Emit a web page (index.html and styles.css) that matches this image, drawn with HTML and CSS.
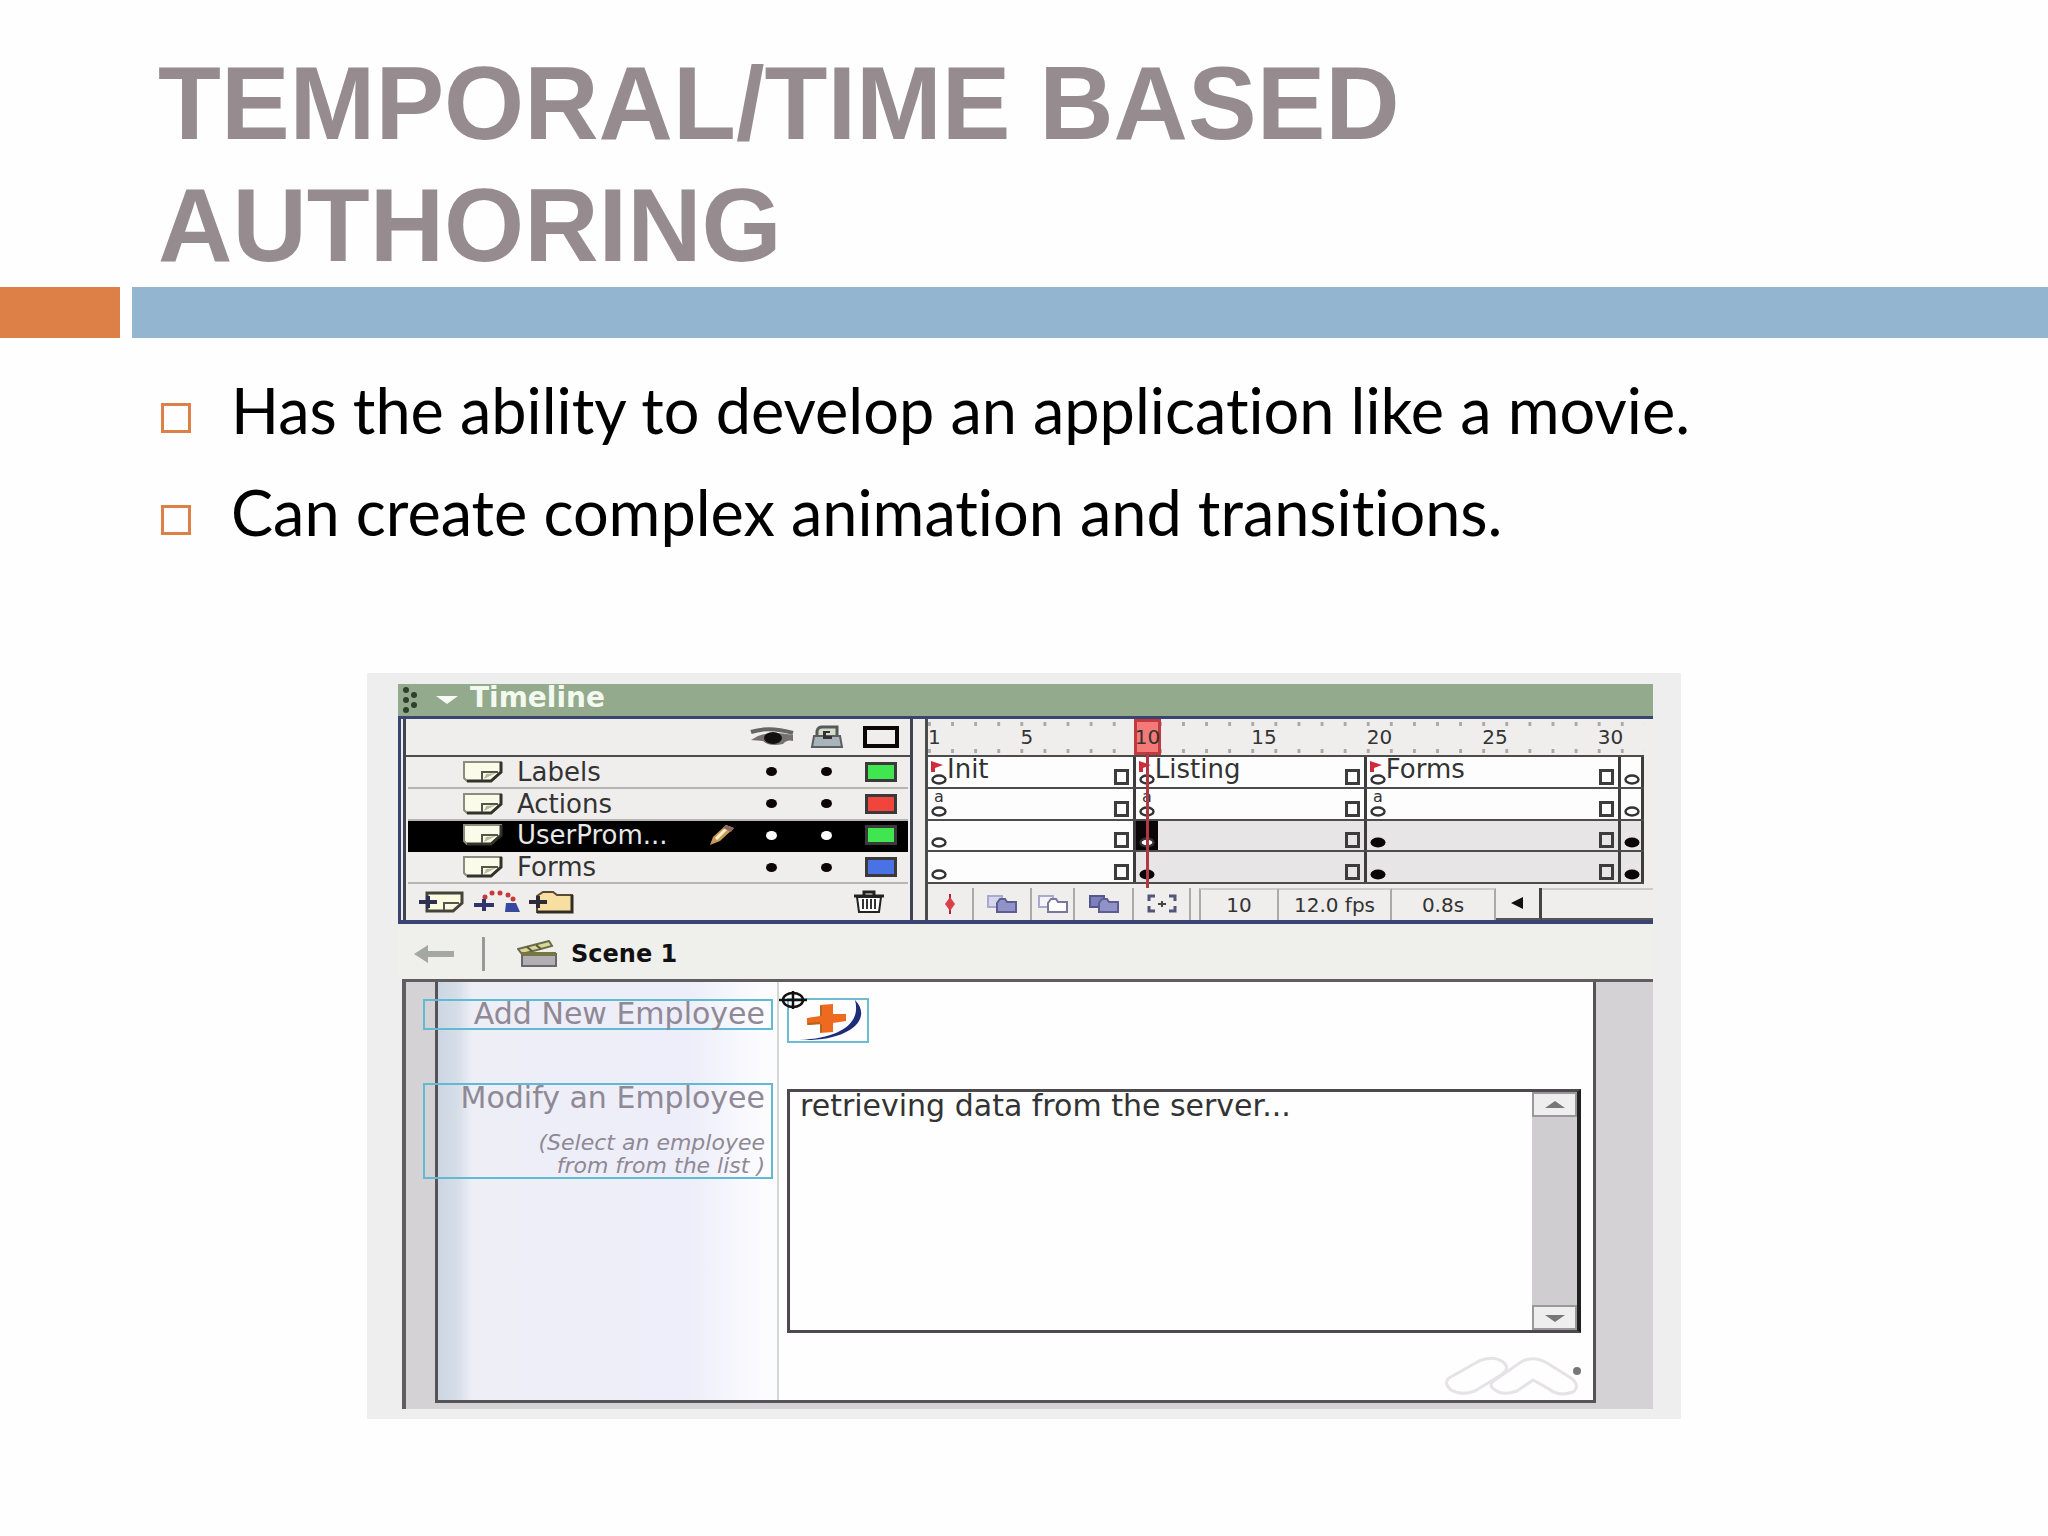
FILE: index.html
```html
<!DOCTYPE html>
<html lang="en">
<head>
    <meta charset="UTF-8">
    <meta name="viewport" content="width=device-width, initial-scale=1.0">
    <title>Temporal/Time Based Authoring</title>
    <link rel="stylesheet" href="styles.css">
</head>
<body>
    <!-- shared icons -->
    <svg class="defs" aria-hidden="true">
        <symbol id="page" viewBox="0 0 42 24">
            <path d="M2 2H39V12L29 21H5L2 18Z" fill="#fafbe9" stroke="#8c8c7c" stroke-width="2"/>
            <path d="M39 2V12L29 21H5" fill="none" stroke="#33332a" stroke-width="3"/>
            <path d="M20 20V12H36" fill="none" stroke="#55554a" stroke-width="2"/>
            <path d="M22 19L24 14L34 13Z" fill="#b9ba9c"/>
        </symbol>
        <symbol id="key" viewBox="0 0 16 11">
            <ellipse cx="8" cy="5.5" rx="6.5" ry="4" fill="#fff" stroke="#333" stroke-width="2.4"/>
        </symbol>
        <symbol id="keyfull" viewBox="0 0 16 11">
            <ellipse cx="8" cy="5.5" rx="7.5" ry="5" fill="#0b0508"/>
        </symbol>
        <symbol id="flag" viewBox="0 0 12 11">
            <path d="M0 0L12 4L4 7V11H0Z" fill="#cf2b3c"/>
        </symbol>
    </svg>

    <main class="slide">
        <h1>TEMPORAL/TIME BASED<br>AUTHORING</h1>
        <div class="bar"><span class="bar-orange"></span><span class="bar-blue"></span></div>
        <ul class="points">
            <li>Has the ability to develop an application like a movie.</li>
            <li>Can create complex animation and transitions.</li>
        </ul>

        <div class="shot">
            <div class="titlebar">
                <svg class="grip" viewBox="0 0 16 26"><g fill="#2f3f2e"><circle cx="4" cy="3" r="3"/><circle cx="12" cy="8" r="3"/><circle cx="4" cy="13" r="3"/><circle cx="12" cy="18" r="3"/><circle cx="4" cy="23" r="3"/></g></svg>
                <svg class="twist" viewBox="0 0 22 8"><path d="M0 0H22L11 8Z" fill="#f7fbf3"/></svg>
                <span>Timeline</span>
            </div>

            <div class="timeline">
                <div class="layers">
                    <div class="layer layer-head">
                        <svg class="eye" viewBox="0 0 46 20"><path d="M2 5Q20-1 44 6" stroke="#666" stroke-width="4" fill="none"/><path d="M2 13Q16 2 44 8V14Q38 12 34 17Q20 20 14 14Z" fill="#77716e"/><ellipse cx="24" cy="11" rx="9" ry="6" fill="#111"/></svg>
                        <svg class="lock" viewBox="0 0 34 24"><path d="M7 12V6Q8 2 12 2H27V12" fill="#d9dccb" stroke="#555b58" stroke-width="3"/><path d="M4 11H30L32 22H2Z" fill="#a9b4ba" stroke="#5a5f62" stroke-width="2"/><path d="M13 6H20V8H16V11H22V14H13Z" fill="#333"/></svg>
                        <span class="outline"></span>
                    </div>
                    <div class="layer">
                        <svg class="page"><use href="#page"/></svg>
                        <span class="name">Labels</span>
                        <i class="dot"></i><i class="dot"></i><i class="swatch green"></i>
                    </div>
                    <div class="layer">
                        <svg class="page"><use href="#page"/></svg>
                        <span class="name">Actions</span>
                        <i class="dot"></i><i class="dot"></i><i class="swatch red"></i>
                    </div>
                    <div class="layer selected">
                        <svg class="page"><use href="#page"/></svg>
                        <span class="name">UserProm...
                            <svg class="pencil" viewBox="0 0 26 22"><path d="M1 21L4 13L17 1L25 4L11 17Z" fill="#c89a58"/><path d="M7 15L19 3" stroke="#fff0cc" stroke-width="3"/><path d="M17 1L25 4L22 8L14 4Z" fill="#8d6b62"/></svg>
                        </span>
                        <i class="dot"></i><i class="dot"></i><i class="swatch green"></i>
                    </div>
                    <div class="layer">
                        <svg class="page"><use href="#page"/></svg>
                        <span class="name">Forms</span>
                        <i class="dot"></i><i class="dot"></i><i class="swatch blue"></i>
                    </div>
                    <div class="layer-tools">
                        <button aria-label="Insert layer"><svg viewBox="0 0 46 24"><path d="M8 3H43V13L34 21H8Z" fill="#fafbe0" stroke="#44443a" stroke-width="3"/><path d="M25 20V13H40" fill="none" stroke="#55554a" stroke-width="2"/><path d="M0 12H18M9 6V18" stroke="#2d3050" stroke-width="4"/></svg></button>
                        <button aria-label="Add motion guide"><svg viewBox="0 0 46 24"><g fill="#c83a3a"><circle cx="11" cy="7" r="2.5"/><circle cx="18" cy="3" r="2.5"/><circle cx="26" cy="3" r="2.5"/><circle cx="34" cy="5" r="2.5"/><circle cx="39" cy="9" r="2.5"/></g><path d="M0 15H20M10 9V21" stroke="#30346a" stroke-width="4"/><path d="M32 13H42L46 22H31Z" fill="#3848a0"/></svg></button>
                        <button aria-label="Insert layer folder"><svg viewBox="0 0 46 24"><path d="M8 6L14 2H24L28 5H43V22H8Z" fill="#f6dfa0" stroke="#5a4a35" stroke-width="2"/><path d="M43 5V22H8" fill="none" stroke="#332b24" stroke-width="3"/><path d="M0 12H18M9 6V18" stroke="#2f2b34" stroke-width="4"/></svg></button>
                        <button class="trash" aria-label="Delete layer"><svg viewBox="0 0 34 24"><path d="M2 6H32M12 5V2H22V5" stroke="#222" stroke-width="3" fill="none"/><path d="M5 7H29L27 22H7Z" fill="#fff" stroke="#222" stroke-width="2"/><path d="M11 9V19M15 9V19M19 9V19M23 9V19" stroke="#333" stroke-width="2"/></svg></button>
                    </div>
                </div>

                <div class="frames">
                    <div class="ruler">
                        <span class="n1">1</span>
                        <span class="n5">5</span>
                        <span class="n10">10</span>
                        <span class="n15">15</span>
                        <span class="n20">20</span>
                        <span class="n25">25</span>
                        <span class="n30">30</span>
                    </div>
                    <div class="track">
                        <div class="clip"><span class="mark"><svg class="flag"><use href="#flag"/></svg><svg class="key"><use href="#key"/></svg></span><span class="label">Init</span><i class="end"></i></div>
                        <div class="clip"><span class="mark"><svg class="flag"><use href="#flag"/></svg><svg class="key"><use href="#key"/></svg></span><span class="label">Listing</span><i class="end"></i></div>
                        <div class="clip"><span class="mark"><svg class="flag"><use href="#flag"/></svg><svg class="key"><use href="#key"/></svg></span><span class="label">Forms</span><i class="end"></i></div>
                        <div class="clip"><span class="mark"><svg class="key"><use href="#key"/></svg></span></div>
                    </div>
                    <div class="track">
                        <div class="clip"><span class="mark"><b>a</b><svg class="key"><use href="#key"/></svg></span><i class="end"></i></div>
                        <div class="clip"><span class="mark"><b>a</b><svg class="key"><use href="#key"/></svg></span><i class="end"></i></div>
                        <div class="clip"><span class="mark"><b>a</b><svg class="key"><use href="#key"/></svg></span><i class="end"></i></div>
                        <div class="clip"><span class="mark"><svg class="key"><use href="#key"/></svg></span></div>
                    </div>
                    <div class="track">
                        <div class="clip"><span class="mark"><svg class="key"><use href="#key"/></svg></span><i class="end"></i></div>
                        <div class="clip filled"><span class="mark current"><svg class="key"><use href="#key"/></svg></span><i class="end"></i></div>
                        <div class="clip filled"><span class="mark"><svg class="key"><use href="#keyfull"/></svg></span><i class="end"></i></div>
                        <div class="clip filled"><span class="mark"><svg class="key"><use href="#keyfull"/></svg></span></div>
                    </div>
                    <div class="track">
                        <div class="clip"><span class="mark"><svg class="key"><use href="#key"/></svg></span><i class="end"></i></div>
                        <div class="clip filled"><span class="mark"><svg class="key"><use href="#keyfull"/></svg></span><i class="end"></i></div>
                        <div class="clip filled"><span class="mark"><svg class="key"><use href="#keyfull"/></svg></span><i class="end"></i></div>
                        <div class="clip filled"><span class="mark"><svg class="key"><use href="#keyfull"/></svg></span></div>
                    </div>
                    <div class="frame-tools">
                        <button aria-label="Center frame"><svg viewBox="0 0 32 20"><path d="M16 0V20" stroke="#b32432" stroke-width="2"/><path d="M16 3L21 10L16 17L11 10Z" fill="#d9404c"/></svg></button>
                        <button aria-label="Onion skin"><svg viewBox="0 0 32 20"><path d="M2 2H16V13H2Z" fill="#d5d5ee" stroke="#a9a9cc" stroke-width="2"/><path d="M11 9L14 5H19L21 8H30V18H11Z" fill="#9192c8" stroke="#5c5d92" stroke-width="2"/></svg></button>
                        <button aria-label="Onion skin outlines"><svg viewBox="0 0 32 20"><path d="M2 2H16V13H2Z" fill="#f3f3fb" stroke="#a9a9cc" stroke-width="2"/><path d="M11 9L14 5H19L21 8H30V18H11Z" fill="#fff" stroke="#77789a" stroke-width="2"/></svg></button>
                        <button aria-label="Edit multiple frames"><svg viewBox="0 0 32 20"><path d="M2 2H16V13H2Z" fill="#7e80bd" stroke="#55578c" stroke-width="2"/><path d="M11 9L14 5H19L21 8H30V18H11Z" fill="#9192c8" stroke="#5c5d92" stroke-width="2"/></svg></button>
                        <button aria-label="Modify onion markers"><svg viewBox="0 0 32 20"><path d="M9 2H3V7M3 12V17H9M23 2H29V7M29 12V17H23" fill="none" stroke="#55557c" stroke-width="3"/><path d="M12 10H20M16 7V13" stroke="#444" stroke-width="2"/></svg></button>
                        <span class="readout first">10</span>
                        <span class="readout">12.0 fps</span>
                        <span class="readout">0.8s</span>
                        <button class="scroll-left" aria-label="Scroll left"><svg viewBox="0 0 32 20"><path d="M21 4V16L9 10Z" fill="#111"/></svg></button>
                        <span class="scroll-track"></span>
                    </div>
                </div>
            </div>

            <div class="scene">
                <button aria-label="Back"><svg viewBox="0 0 40 20"><path d="M0 10L14 1V7H40V13H14V19Z" fill="#a3a8a3"/></svg></button>
                <span class="rule"></span>
                <svg class="clapper" viewBox="0 0 42 28"><path d="M1 9L32 1L35 6L5 14Z" fill="#d9d893" stroke="#6b6b50" stroke-width="2"/><path d="M10 7L15 11M19 5L24 9" stroke="#55553c" stroke-width="2"/><path d="M5 14H39V26H5Z" fill="#b3aeb4" stroke="#6b6670" stroke-width="2"/><path d="M5 14H39" stroke="#74773f" stroke-width="4"/></svg>
                <span>Scene 1</span>
            </div>

            <div class="stage">
                <div class="canvas">
                    <div class="side">
                        <div class="pick"><p>Add New Employee</p></div>
                        <label class="pick modify" for="employees">
                            Modify an Employee
                            <em>(Select an employee<br>from from the list )</em>
                        </label>
                    </div>
                    <div class="form">
                        <button class="add" aria-label="Add employee">
                            <svg viewBox="0 0 78 42"><path d="M66 0C84 18 62 42 10 40C54 38 72 22 66 0Z" fill="#1d2c78"/><path d="M31 5L44 4V14H57V21L44 23V32L31 33V24L18 25V18L31 16Z" fill="#ee6a1e"/><path d="M32 6V16M32 24V32M19 24L31 23" stroke="#b5641c" stroke-width="2" fill="none"/></svg>
                            <svg class="target" viewBox="0 0 28 18"><ellipse cx="14" cy="9" rx="10" ry="7" fill="none" stroke="#111" stroke-width="2.5"/><path d="M0 9H28M14 0V18" stroke="#111" stroke-width="2.5"/></svg>
                        </button>
                        <div class="list">
                            <textarea id="employees" readonly>retrieving data from the server...</textarea>
                            <div class="scrollbar">
                                <button aria-label="Up"><svg viewBox="0 0 20 8"><path d="M0 7L10 0L20 7Z" fill="#777"/></svg></button>
                                <button aria-label="Down"><svg viewBox="0 0 20 8"><path d="M0 1L10 8L20 1Z" fill="#777"/></svg></button>
                            </div>
                        </div>
                        <svg class="logo" viewBox="0 0 140 40"><g fill="none" stroke="#e6e2e6" stroke-width="3"><path d="M8 22L38 5Q52-1 62 6Q70 12 60 19L34 35Q20 40 10 34Q2 27 8 22Z"/><path d="M54 24L80 6Q92-1 106 7L130 22Q140 30 132 36Q118 41 108 33L92 24L76 35Q62 40 54 34Q46 29 54 24Z"/></g><circle cx="136" cy="15" r="4" fill="#777"/></svg>
                    </div>
                </div>
            </div>
        </div>
    </main>
</body>
</html>
```
FILE: styles.css
```css
*,
*::before,
*::after {
    box-sizing: border-box;
}
body {
    margin: 0;
    background: #fefefe;
    font-family: Lato, sans-serif;
    color: #000;
}
button {
    padding: 0;
    border: 0;
    background: none;
}
svg {
    display: block;
}
.defs {
    display: none;
}

/* slide */
.slide {
    padding-top: 43px;
}
h1 {
    margin: 0 158px;
    font: bold 103px/122px "Liberation Sans", Arial, sans-serif;
    color: #968c8f;
}
.bar {
    display: flex;
    gap: 12px;
    height: 51px;
}
.bar-orange {
    width: 120px;
    background: #dd8047;
}
.bar-blue {
    flex: 1;
    background: #93b5cf;
}
.points {
    display: grid;
    gap: 22px;
    margin: 32px 161px 0;
    padding: 0;
    list-style: none;
    font-size: 63px;
    font-variant-ligatures: none;
    line-height: 80px;
}
.points li {
    display: flex;
    align-items: center;
    gap: 40px;
}
.points li::before {
    content: "";
    width: 30px;
    height: 30px;
    margin-top: 16px;
    border: 3px solid #dd8047;
}

/* editor window */
.shot {
    max-width: 1314px;
    margin: 121px auto 0;
    padding: 11px 28px 10px 31px;
    background: #efeeef;
    font-family: "DejaVu Sans", Verdana, sans-serif;
    font-size: 26px;
    color: #333;
}
.titlebar {
    display: flex;
    align-items: center;
    height: 32px;
    padding-left: 4px;
    background: #93aa8d;
    font-weight: bold;
    font-size: 28px;
    line-height: 28px;
    color: #f4f9f0;
}
.titlebar span {
    padding-bottom: 4px;
}
.grip {
    width: 16px;
    height: 26px;
}
.twist {
    width: 22px;
    height: 8px;
    margin: 0 12px 0 18px;
}
.timeline {
    display: flex;
    height: 208px;
    border: solid #3a4470;
    border-width: 3px 0 4px 3px;
    background: #efeeed;
}

/* layer list */
.layers {
    display: grid;
    grid-template-rows: 38px repeat(4, minmax(0, 1fr)) 36px;
    width: 510px;
    margin-left: 2px;
    border: solid #3f4450;
    border-width: 0 3px;
}
.layer {
    display: grid;
    grid-template-columns: 55px 1fr 55px 55px 54px;
    align-items: center;
    justify-items: center;
    padding-left: 54px;
    margin: 0 2px;
    border-bottom: 2px solid #b5b5b3;
}
.layer-head {
    grid-template-columns: 55px 55px 54px;
    justify-content: end;
    margin: 0;
    padding-right: 2px;
    border-color: #4c4c4c;
}
.eye {
    width: 46px;
    height: 20px;
}
.lock {
    width: 34px;
    height: 24px;
}
.outline {
    width: 36px;
    height: 22px;
    border: 4px solid #0b0508;
}
.page {
    justify-self: start;
    width: 42px;
    height: 24px;
}
.name {
    display: flex;
    justify-content: space-between;
    align-items: center;
    justify-self: stretch;
    padding-right: 9px;
    line-height: 28px;
}
.pencil {
    width: 26px;
    height: 22px;
}
.dot {
    width: 11px;
    height: 9px;
    border-radius: 50%;
    background: #0b0508;
}
.swatch {
    width: 32px;
    height: 20px;
    border: 3px solid #3a3a3a;
}
.green {
    background: #3fe650;
}
.red {
    background: #f0443c;
}
.blue {
    background: #4a72e4;
}
.selected {
    background: #000;
    border-color: #000;
    color: #e8e8e8;
}
.selected .dot {
    background: #fff;
}
.layer-tools {
    display: flex;
    align-items: center;
    gap: 9px;
    padding: 0 24px 0 13px;
}
.layer-tools svg {
    width: 46px;
    height: 24px;
}
.layer-tools .trash {
    margin-left: auto;
}
.layer-tools .trash svg {
    width: 34px;
}

/* frames */
.frames {
    display: grid;
    grid-template-rows: 38px repeat(4, minmax(0, 1fr)) 36px;
    flex: 1;
    min-width: 0;
    margin-left: 12px;
    border-left: 3px solid #4c4c4c;
}
.ruler,
.track {
    display: grid;
    grid-template-columns: repeat(31, minmax(0, 1fr));
    margin-right: 9px;
    border-bottom: 2px solid #4c4c4c;
}
.ruler {
    align-items: center;
    background:
        linear-gradient(90deg, #aaa 3px, transparent 3px) 0 3px / calc(100% / 31) 4px repeat-x,
        linear-gradient(90deg, #aaa 3px, transparent 3px) 0 30px / calc(100% / 31) 4px repeat-x;
    font-size: 20px;
    line-height: 34px;
}
.ruler span {
    grid-row: 1;
}
.n1 { grid-column: 1; }
.n5 { grid-column: 5; }
.n10 { grid-column: 10; }
.n15 { grid-column: 15; }
.n20 { grid-column: 20; }
.n25 { grid-column: 25; }
.n30 { grid-column: 30; }
.n10 {
    position: relative;
    display: flex;
    justify-content: center;
    margin: 0 -2px;
    border: 3px solid #c03a40;
    background: #f47a78;
    line-height: 30px;
}
/* playhead */
.n10::after {
    content: "";
    position: absolute;
    top: 100%;
    left: 9px;
    width: 3px;
    height: 136px;
    background: #b03844;
}
.clip {
    display: flex;
    align-items: end;
    min-width: 0;
    padding: 0 4px 2px 3px;
    border-right: 3px solid #3c3c3c;
    background: #fdfdfd;
}
.clip:nth-child(1) { grid-column: span 9; }
.clip:nth-child(2) { grid-column: span 10; }
.clip:nth-child(3) { grid-column: span 11; }
.clip:last-child {
    grid-column: span 1;
    padding-right: 0;
}
.filled {
    background: #e7e5e6;
}
.mark {
    flex: none;
    width: 16px;
}
.mark b {
    display: block;
    margin-bottom: 3px;
    font-size: 16px;
    font-weight: normal;
    line-height: 12px;
    text-align: center;
}
.flag {
    width: 12px;
    height: 11px;
    margin-bottom: 2px;
}
.key {
    width: 16px;
    height: 11px;
}
.current {
    display: flex;
    align-items: end;
    align-self: stretch;
    width: 22px;
    margin: 0 0 -2px -3px;
    padding: 0 3px 2px;
    background: #0b0508;
}
.label {
    align-self: start;
    line-height: 25px;
}
.end {
    width: 15px;
    height: 16px;
    margin-left: auto;
    border: 3px solid #3c3c3c;
}
.frame-tools {
    display: grid;
    grid-template-columns: 46px 58px 43px 59px 57px 88px 113px 104px 46px 1fr;
    padding-top: 4px;
    font-size: 20px;
}
.frame-tools > * {
    display: flex;
    align-items: center;
    justify-content: center;
    border-right: 2px solid #aaa;
}
.frame-tools svg {
    width: 32px;
    height: 20px;
}
.frame-tools .readout {
    border-top: 2px solid #ccc;
}
.frame-tools .first {
    margin-left: 8px;
    border-left: 2px solid #aaa;
}
.frame-tools .scroll-left {
    border-right: 3px solid #444;
    border-bottom: 2px solid #555;
}
.frame-tools .scroll-track {
    border: solid #ccc;
    border-width: 2px 0;
    border-bottom-color: #555;
}

/* scene bar */
.scene {
    display: flex;
    align-items: center;
    height: 55px;
    padding: 4px 0 0 16px;
    background: #efefec;
    font-size: 24px;
    font-weight: bold;
    color: #111;
}
.scene button svg {
    width: 40px;
    height: 20px;
}
.rule {
    width: 3px;
    height: 34px;
    margin: 0 32px 0 28px;
    background: #999;
}
.clapper {
    width: 42px;
    height: 28px;
    margin-right: 12px;
}

/* stage */
.stage {
    margin-left: 4px;
    padding: 0 57px 6px 29px;
    border: solid #5f5d60;
    border-width: 3px 0 0 4px;
    background: #d4d2d4;
}
.canvas {
    display: flex;
    border: 3px solid #555358;
    border-top: 0;
    background: #fefefe;
}
.side {
    width: 341px;
    padding: 17px 4px 0 0;
    border-right: 2px solid #d3d8d4;
    background: linear-gradient(90deg, #ccd6e2, #d6dee8 20px, #eeeef7 34px, #eeeefa 75%, #fcfcff 96%);
    color: #8f8995;
    text-align: right;
}
.pick {
    display: block;
    height: 31px;
    margin: 0 0 53px -15px;
    padding-right: 6px;
    border: 2px solid #62b9d3;
    font-size: 30px;
    line-height: 26px;
    white-space: nowrap;
}
.pick p {
    margin: 0;
}
.modify {
    height: 96px;
    margin-bottom: 0;
}
.modify em {
    display: block;
    margin-top: 20px;
    font-size: 22px;
    line-height: 23px;
}
.form {
    flex: 1;
    display: flex;
    flex-direction: column;
    padding: 16px 12px 4px 8px;
}
.add {
    position: relative;
    width: 82px;
    height: 45px;
    border: 2px solid #6fbcd2;
}
/* registration mark on the corner of the symbol */
.target {
    position: absolute;
    top: -9px;
    left: -10px;
    width: 28px;
    height: 18px;
}
.list {
    display: flex;
    height: 244px;
    margin-top: 46px;
    border: 3px solid #4c4a4d;
    border-right: 4px solid #222;
}
textarea {
    flex: 1;
    min-width: 0;
    padding: 0 10px;
    border: 0;
    outline: 0;
    resize: none;
    background: #fefefe;
    font: 30px/28px "DejaVu Sans", Verdana, sans-serif;
    color: #333;
}
.scrollbar {
    display: flex;
    flex-direction: column;
    justify-content: space-between;
    width: 45px;
    background: #cfcdcf;
}
.scrollbar button {
    display: flex;
    align-items: center;
    justify-content: center;
    height: 25px;
    border: 2px solid #999;
    background: #efeeef;
}
.scrollbar svg {
    width: 20px;
    height: 8px;
}
.logo {
    width: 140px;
    height: 40px;
    margin: 23px 0 0 auto;
}
```
